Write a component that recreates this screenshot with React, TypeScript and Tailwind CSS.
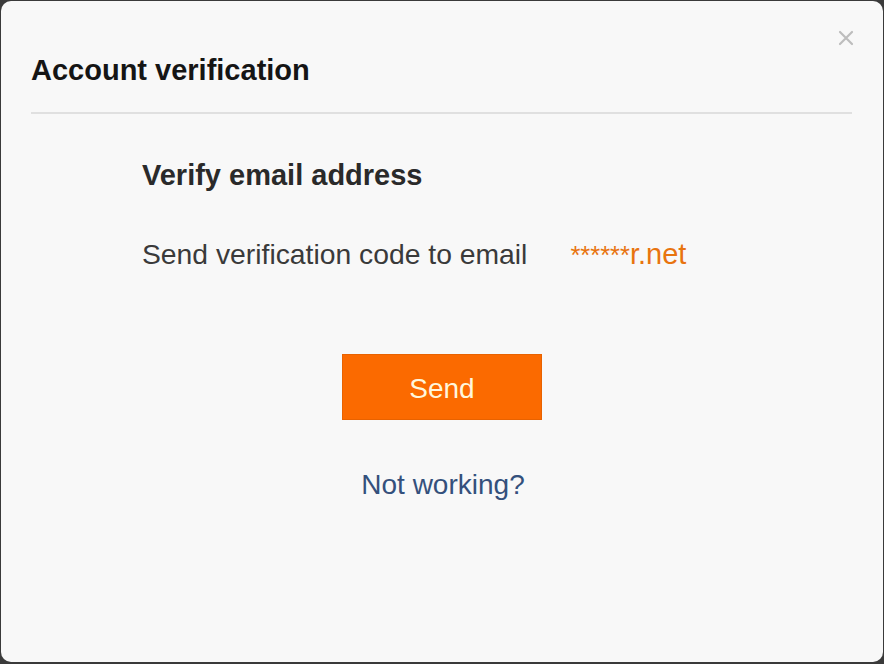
import React from "react";

export default function App() {
  return (
    <div className="w-[884px] h-[664px] bg-[#3a3a3a] pl-px pr-px pt-px pb-[2px]" style={{ fontFamily: '"Liberation Sans", Arial, sans-serif' }}>
      <div className="relative h-full w-full rounded-[10px] bg-[#f8f8f8] flex flex-col">
        <button className="absolute right-[29px] top-[29px] w-[16px] h-[16px] flex items-center justify-center" aria-label="close">
          <svg width="16" height="16" viewBox="0 0 16 16">
            <path d="M2 2 L14 14 M14 2 L2 14" stroke="#bdbdbd" strokeWidth="2.2" strokeLinecap="round" />
          </svg>
        </button>
        <div className="pt-[53px] pl-[30px] pr-[31px]">
          <h1 className="text-[29px] leading-[32px] font-bold text-[#151515]">Account verification</h1>
          <div className="mt-[26px] h-[2px] bg-[#e0e0e0]" />
        </div>
        <div className="pl-[141px] pt-[45px]">
          <h2 className="text-[29px] leading-[32px] font-bold text-[#2a2a2a]">Verify email address</h2>
          <div className="mt-[47px] h-[32px] flex items-baseline text-[28px] leading-[32px]">
            <span className="text-[28.3px] leading-[32px] text-[#3a3a3a]">Send verification code to email</span>
            <span className="ml-[43px] leading-[32px] text-[29px] text-[#e8740f]">
              <span className="text-[25.5px] leading-[20px]">******</span>r.net
            </span>
          </div>
        </div>
        <div className="mt-[84px] flex flex-col items-center">
          <button className="w-[200px] h-[66px] pt-[3px] bg-[#fb6a00] border border-[#e86200] text-[#fff6dc] text-[28px] leading-[32px]">
            Send
          </button>
          <a className="mt-[49px] text-[28px] leading-[32px] text-[#34507c] pl-[2px]">Not working?</a>
        </div>
      </div>
    </div>
  );
}
